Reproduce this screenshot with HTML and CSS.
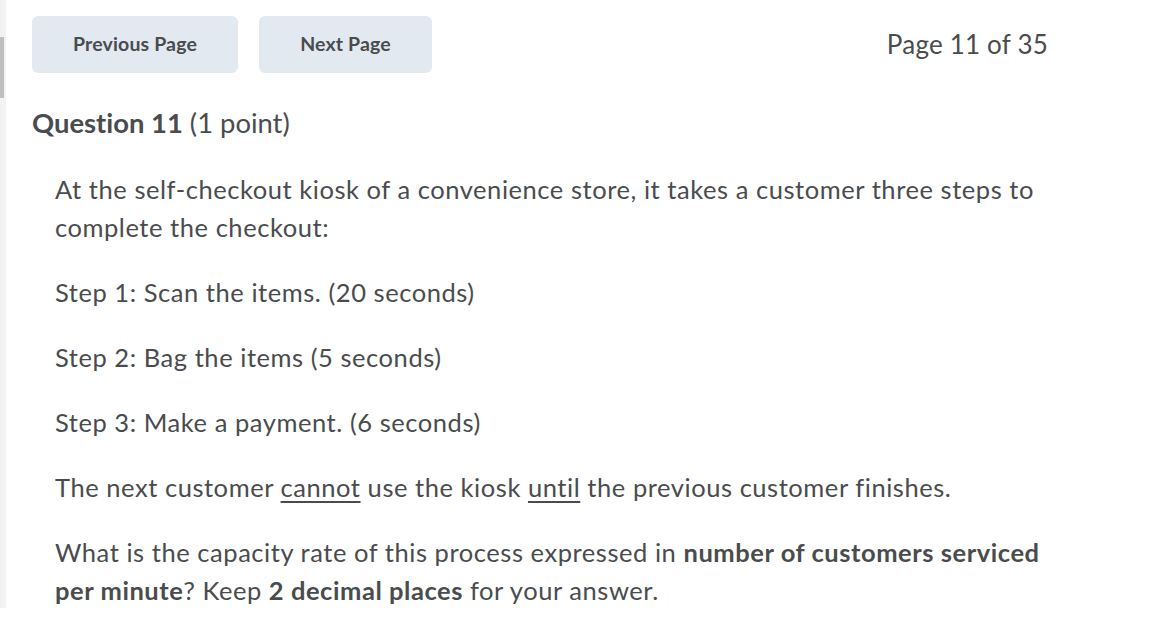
FILE: index.html
```html
<!DOCTYPE html>
<html>
<head>
<meta charset="utf-8">
<link rel="stylesheet" href="styles.css">
</head>
<body>
<div class="page">
  <div class="strip"><div class="thumb"></div></div>
  <main class="main">
    <div class="nav">
      <button class="btn btn-prev">Previous Page</button>
      <button class="btn btn-next">Next Page</button>
      <div class="pageno">Page 11 of 35</div>
    </div>
    <h2 class="qtitle"><strong>Question 11</strong> <span class="pts">(1 point)</span></h2>
    <div class="qbody">
      <p>At the self-checkout kiosk of a convenience store, it takes a customer three steps to complete the checkout:</p>
      <p>Step 1: Scan the items. (20 seconds)</p>
      <p>Step 2: Bag the items (5 seconds)</p>
      <p>Step 3: Make a payment. (6 seconds)</p>
      <p>The next customer <u>cannot</u> use the kiosk <u>until</u> the previous customer finishes.</p>
      <p>What is the capacity rate of this process expressed in <strong>number of customers serviced per minute</strong>? Keep <strong>2 decimal places</strong> for your answer.</p>
    </div>
  </main>
</div>
</body>
</html>
```

FILE: styles.css
```css
html, body {
  margin: 0;
  padding: 0;
  background: #ffffff;
}
body {
  font-family: Lato, "Noto Sans", sans-serif;
  font-variant-ligatures: none;
  color: #494c4e;
  width: 1175px;
  height: 637px;
  overflow: hidden;
}
.page {
  display: flex;
  align-items: flex-start;
}
.strip {
  width: 6px;
  height: 608px;
  background: #f2f2f2;
  flex: none;
}
.thumb {
  margin-top: 37px;
  width: 4px;
  height: 61px;
  background: #bfbfbf;
}
.main {
  padding: 16px 0 0 26px;
  flex: 1;
}
.nav {
  display: flex;
  align-items: center;
  width: 1016px;
}
.btn {
  height: 57px;
  border: none;
  border-radius: 6px;
  background: #e3e9f1;
  color: #494c4e;
  font-family: Lato, "Noto Sans", sans-serif;
  font-variant-ligatures: none;
  font-weight: 700;
  font-size: 19.5px;
  letter-spacing: 0.15px;
  padding: 0 0 2px 0;
}
.btn-prev { width: 206px; }
.btn-next { width: 173px; margin-left: 21px; }
.pageno {
  margin-left: auto;
  font-size: 26px;
  letter-spacing: 0.2px;
  padding-bottom: 2px;
}
.qtitle {
  margin: 33px 0 0 0;
  font-size: 27.4px;
  font-weight: 400;
  line-height: 34px;
}
.qtitle strong { font-weight: 700; }
.qbody {
  padding: 30px 0 0 23px;
  width: 1000px;
  font-size: 25.5px;
  letter-spacing: 0.55px;
  line-height: 38px;
}
.qbody p {
  margin: 0 0 27px 0;
}
.qbody strong { font-weight: 700; }
.qbody u {
  text-underline-offset: 4px;
  text-decoration-thickness: 2px;
}
```
